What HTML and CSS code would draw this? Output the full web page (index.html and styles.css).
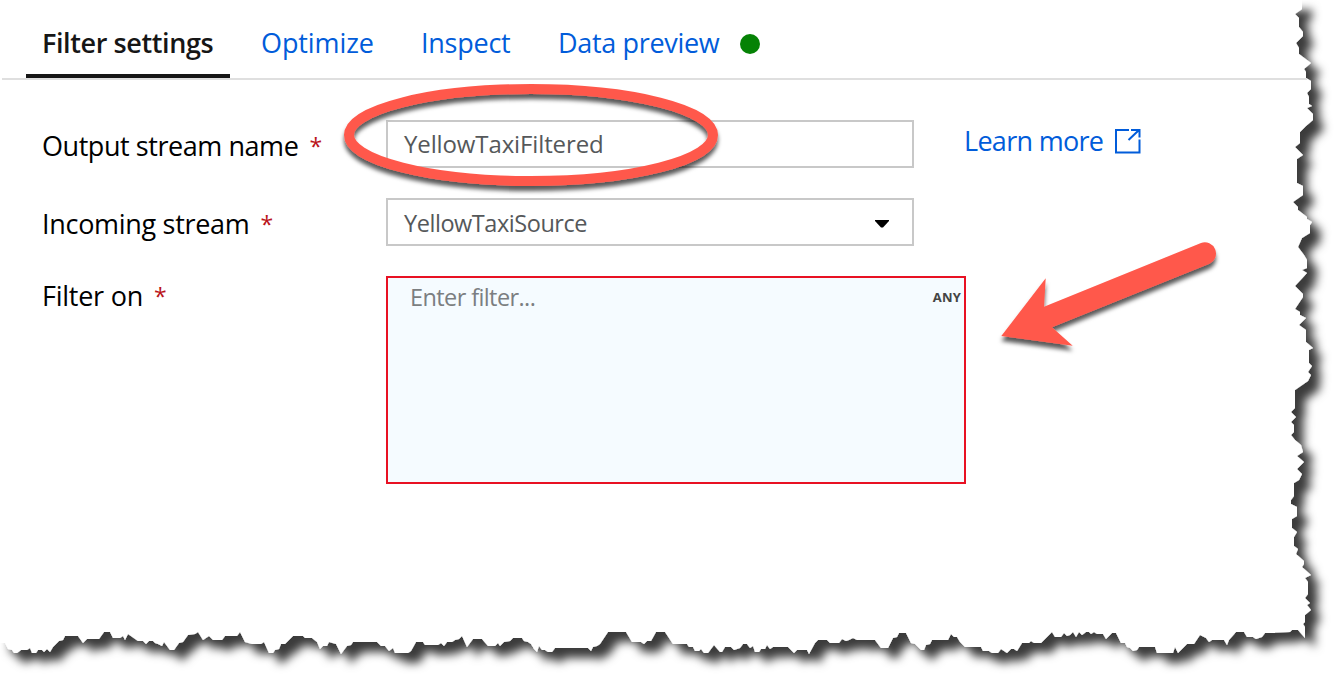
FILE: index.html
```html
<!DOCTYPE html>
<html lang="en">
<head>
<meta charset="utf-8">
<title>Filter settings</title>
<link rel="stylesheet" href="styles.css">
</head>
<body>
<svg class="paper" width="1334" height="674" viewBox="0 0 1334 674" aria-hidden="true">
  <defs>
    <filter id="torn" filterUnits="userSpaceOnUse" x="-40" y="-40" width="1400" height="740">
      <feDropShadow dx="10" dy="10" stdDeviation="5" flood-color="#000" flood-opacity=".77"/>
    </filter>
  </defs>
  <g fill="#fff" filter="url(#torn)">
    <path d="M0 0L0 643 5 643 8 649 12 650 14 653 17 653 21 650 27 650 30 648 32 653 36 653 38 650 42 650 44 652 47 649 50 652 53 647 59 641 63 640 65 636 78 636 83 643 87 639 99 639 104 632 110 632 113 638 120 638 123 636 125 640 128 634 138 641 143 641 146 644 149 641 153 641 155 643 158 644 162 646 164 642 170 650 174 650 179 643 183 642 188 635 195 634 198 632 203 640 209 636 213 640 222 640 225 636 237 636 240 632 245 642 252 644 261 644 264 642 269 653 273 653 275 650 279 649 281 644 285 644 293 636 303 636 305 638 312 638 317 642 320 649 323 646 327 646 329 642 336 644 341 654 347 646 351 645 353 642 377 642 381 646 385 646 389 651 393 648 395 653 408 653 411 651 416 642 423 642 425 645 438 645 441 643 444 646 447 642 452 642 455 640 459 639 462 636 467 647 473 639 482 639 488 646 495 646 498 643 500 646 504 642 510 641 513 638 522 638 524 641 528 642 531 644 534 649 537 652 539 646 542 650 545 650 548 652 552 652 555 648 588 648 591 651 593 647 597 646 600 644 608 632 626 632 632 642 641 642 644 644 647 641 651 641 656 632 665 632 673 644 687 644 689 647 693 647 695 651 699 651 701 649 704 653 708 653 714 645 720 652 722 652 725 647 731 647 734 650 740 648 743 644 747 644 750 648 753 646 755 652 759 652 761 649 765 649 767 645 770 649 773 647 788 647 794 653 797 650 807 650 809 654 815 643 818 640 827 640 830 643 839 643 842 639 846 641 849 640 853 638 857 640 875 640 881 648 888 648 893 638 897 637 899 633 906 633 911 643 915 644 921 650 924 650 926 645 930 644 932 640 948 640 951 634 954 637 957 637 960 642 965 647 981 647 983 651 989 651 992 653 998 653 1001 649 1007 653 1011 649 1014 649 1017 651 1022 643 1029 643 1031 641 1034 643 1041 643 1052 632 1055 637 1061 637 1064 633 1067 636 1070 635 1073 632 1076 637 1079 632 1082 635 1086 632 1089 632 1091 634 1094 632 1097 634 1103 634 1106 639 1112 633 1116 633 1121 643 1125 643 1127 647 1130 648 1133 651 1137 650 1139 647 1155 647 1157 653 1173 653 1175 647 1178 653 1187 644 1194 644 1200 635 1206 638 1209 642 1212 640 1224 640 1227 645 1229 640 1236 632 1244 632 1247 637 1253 637 1256 639 1262 637 1265 633 1275 633 1275 0Z"/>
    <path d="M1264 0L1302 0 1302 9 1295 14 1299 18 1299 27 1303 32 1303 36 1296 43 1299 48 1299 54 1311 63 1304 69 1306 72 1306 78 1311 81 1311 89 1307 93 1309 97 1309 104 1312 106 1307 108 1313 114 1313 120 1306 126 1300 132 1300 143 1295 147 1303 155 1297 159 1297 183 1303 186 1303 195 1293 202 1298 207 1298 210 1307 217 1307 219 1312 222 1310 225 1310 233 1302 238 1298 247 1304 255 1307 260 1307 268 1302 270 1307 273 1295 286 1303 294 1303 297 1295 309 1300 312 1300 315 1306 318 1299 325 1306 330 1306 342 1313 348 1309 350 1309 363 1312 366 1308 372 1311 375 1308 381 1295 390 1295 408 1291 412 1296 417 1291 422 1294 425 1294 432 1291 435 1295 440 1301 445 1303 452 1297 456 1304 462 1297 469 1302 474 1299 480 1294 483 1294 496 1291 500 1291 504 1297 507 1297 516 1292 519 1292 528 1297 532 1294 537 1294 546 1298 549 1296 554 1304 561 1304 564 1302 567 1311 575 1305 578 1308 582 1308 594 1305 598 1310 603 1307 605 1311 610 1305 615 1305 622 1303 624 1305 627 1305 638 1298 630 1292 630 1290 632 1264 633Z"/>
  </g>
</svg>

<main class="panel">
  <nav class="tabs">
    <a class="tab tab-active">Filter settings</a>
    <a class="tab tab-optimize">Optimize</a>
    <a class="tab tab-inspect">Inspect</a>
    <a class="tab tab-preview">Data preview</a>
    <span class="status"></span>
  </nav>

  <form class="form">
    <div class="row">
      <label class="label"><span class="t-output">Output stream name</span><span class="req">*</span></label>
      <div class="field"><span class="value v-filtered">YellowTaxiFiltered</span></div>
      <a class="learn"><span class="learn-text">Learn more</span>
        <svg class="ext" width="27" height="26" viewBox="0 0 27 26" fill="none" stroke="#015cda" stroke-width="2">
          <path d="M15 2H2V24.500H25.500V11.500M17 2H25.500V9.500M14.500 12L25 2"/>
        </svg>
      </a>
    </div>
    <div class="row">
      <label class="label"><span class="t-incoming">Incoming stream</span><span class="req">*</span></label>
      <div class="field select"><span class="value v-source">YellowTaxiSource</span>
        <svg class="caret" width="14" height="8" viewBox="0 0 14 8"><path d="M0 0H14V1L8 7.500H6L0 1Z"/></svg>
      </div>
    </div>
    <div class="row row-filter">
      <label class="label"><span class="t-filter">Filter on</span><span class="req">*</span></label>
      <div class="editor"><span class="placeholder">Enter filter...</span><span class="type">ANY</span></div>
    </div>
  </form>
</main>

<svg class="marks" width="1334" height="674" viewBox="0 0 1334 674" aria-hidden="true">
  <defs>
    <filter id="lift" filterUnits="userSpaceOnUse" x="320" y="60" width="940" height="320">
      <feDropShadow dx="0" dy="5" stdDeviation="2" flood-color="#000" flood-opacity=".65"/>
    </filter>
  </defs>
  <g filter="url(#lift)">
    <ellipse cx="531" cy="135" rx="182" ry="46" fill="none" stroke="#ff594c" stroke-width="10"/>
    <path fill="#ff594c" d="M1001.300 336L1045.700 278.300 1044 306.700 1201 243A11.200 11.200 0 0 1 1209.500 263.700L1052 327.300 1072.700 345.700Z"/>
  </g>
</svg>
</body>
</html>
```
FILE: styles.css
```css
* { box-sizing: border-box; }

body {
  margin: 0;
  width: 1334px;
  height: 674px;
  position: relative;
  overflow: hidden;
  background: #fff;
  color: #000;
  font-family: "Open Sans", "Noto Sans", sans-serif;
  font-size: 27px;
}

.paper, .marks {
  position: absolute;
  inset: 0;
  display: block;
  pointer-events: none;
}

.panel { position: relative; }

.tabs {
  display: flex;
  height: 80px;
  width: 1305px;
  margin-left: 2px;
  padding-left: 24px;
  border-bottom: 2px solid #dfdfdf;
}

.tab {
  height: 78px;
  padding-top: 22px;
  line-height: 41px;
  white-space: nowrap;
  color: #015cda;
}

.tab-active {
  width: 204px;
  padding-left: 16px;
  margin-right: 31px;
  border-bottom: 4px solid #161616;
  color: #161616;
  font-weight: 600;
  letter-spacing: -0.4px;
}

.tab-optimize { width: 160px; letter-spacing: -0.1px; }
.tab-inspect { width: 137px; letter-spacing: -0.25px; }
.tab-preview { width: 182px; letter-spacing: -0.33px; }

.status {
  width: 20px;
  height: 20px;
  margin-top: 34px;
  border-radius: 50%;
  background: #058205;
}

.form {
  display: flex;
  flex-direction: column;
  gap: 30px;
  padding: 40px 0 0 42px;
}

.row {
  display: flex;
  height: 48px;
}

.row-filter { height: 208px; }

.label {
  display: flex;
  width: 344px;
  line-height: 52px;
  white-space: nowrap;
}

.row-filter .label { line-height: 40px; }

.t-output { letter-spacing: -0.44px; }
.t-incoming { letter-spacing: -0.3px; }
.t-filter { letter-spacing: -0.25px; }

.req {
  margin-left: 11px;
  color: #ba141a;
  font-size: 23px;
}

.field {
  display: flex;
  justify-content: space-between;
  width: 528px;
  padding-left: 16px;
  border: 2px solid #c8c8c8;
  background: transparent;
  color: #55585a;
  font-size: 24px;
  line-height: 43px;
}

.v-filtered { letter-spacing: -0.12px; }
.v-source { font-size: 23.5px; letter-spacing: -0.45px; }

.select {
  padding-right: 23px;
  line-height: 46px;
}

.caret { margin-top: 20px; }

.learn {
  display: flex;
  margin-left: 50px;
  color: #015cda;
  line-height: 41px;
}

.learn-text {
  width: 150px;
  white-space: nowrap;
  letter-spacing: -0.7px;
}

.ext { margin-top: 8px; }

.editor {
  display: flex;
  justify-content: space-between;
  width: 580px;
  padding: 0 3px 0 22px;
  border: 2px solid #e81123;
  background: #f5fbff;
  color: #7b7e81;
  font-size: 24px;
  line-height: 39px;
}

.placeholder { font-size: 23.5px; letter-spacing: -0.6px; }

.type {
  color: #444;
  font-size: 13px;
  font-weight: 700;
  line-height: 38px;
  letter-spacing: 0.2px;
}
```
